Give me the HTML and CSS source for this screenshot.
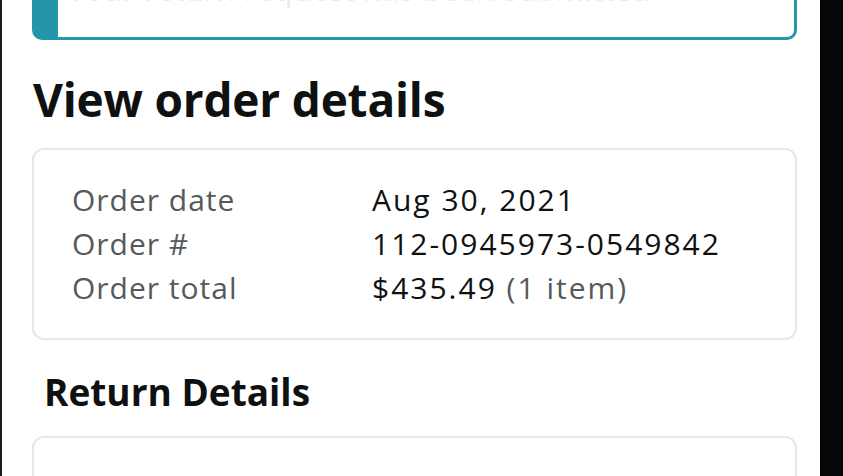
FILE: index.html
```html
<!DOCTYPE html>
<html lang="en">
<head>
<meta charset="utf-8">
<title>Order details</title>
<link rel="stylesheet" href="styles.css">
</head>
<body>
<div class="frame">
  <main class="screen">
    <div class="alert">
      <p class="alert-text">Your return request has been submitted</p>
    </div>
    <h1 class="title">View order details</h1>
    <section class="card">
      <div class="row"><span class="label">Order date</span><span class="value">Aug 30, 2021</span></div>
      <div class="row"><span class="label">Order #</span><span class="value">112-0945973-0549842</span></div>
      <div class="row"><span class="label">Order total</span><span class="value">$435.49 <span class="muted">(1 item)</span></span></div>
    </section>
    <h2 class="subtitle">Return Details</h2>
    <section class="card card-next">
      <div class="row"><span class="label">Return by</span><span class="value">Sep 30, 2021</span></div>
    </section>
  </main>
  <div class="edge"></div>
</div>
</body>
</html>
```
FILE: styles.css
```css
html, body {
  margin: 0;
  padding: 0;
  background: #fff;
  overflow: hidden;
}
body {
  font-family: "Open Sans", "Noto Sans", sans-serif;
  color: #0f1111;
}
.frame {
  display: flex;
  height: 476px;
  border-left: 2px solid #1a1a1a;
  overflow: hidden;
}
.screen {
  flex: 1;
  padding: 0 23px 0 30px;
  display: flex;
  flex-direction: column;
  min-width: 0;
}
.edge {
  width: 23px;
  background: #050708;
  flex: none;
}
.alert {
  margin-top: -60px;
  height: 100px;
  box-sizing: border-box;
  border: 3px solid #2397a9;
  border-left-width: 26px;
  border-radius: 10px;
  padding: 0 0 0 10px;
  flex: none;
}
.alert-text {
  margin: 32px 0 0;
  font-size: 30px;
  color: #ebebeb;
  line-height: 1;
  letter-spacing: 0.5px;
}
.title {
  margin: 31px 0 0 1px;
  font-size: 46px;
  font-weight: 700;
  line-height: 56px;
  letter-spacing: -0.2px;
}
.card {
  margin-top: 21px;
  border: 2px solid #e6e8e8;
  border-radius: 12px;
  padding: 28px 0 28px 38px;
  flex: none;
}
.row {
  display: flex;
  font-size: 30px;
  line-height: 44px;
}
.label {
  width: 300px;
  color: #565959;
  flex: none;
  letter-spacing: 1px;
}
.value {
  color: #0f1111;
  letter-spacing: 2px;
}
.muted {
  color: #565959;
}
.subtitle {
  margin: 28px 0 0 12px;
  font-size: 37px;
  font-weight: 700;
  line-height: 48px;
}
.card-next {
  margin-top: 20px;
}
```
